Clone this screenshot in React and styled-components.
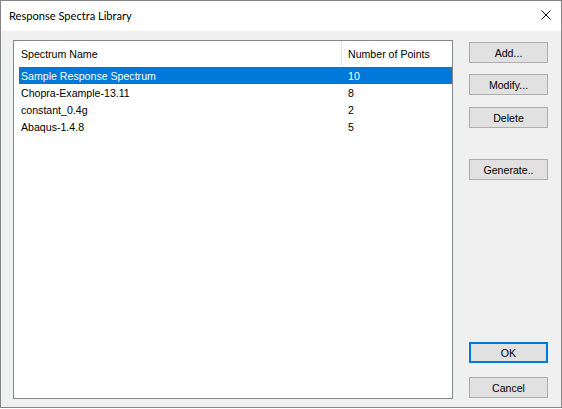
import styled, { createGlobalStyle } from "styled-components";

const GlobalStyle = createGlobalStyle`
  html, body {
    margin: 0;
    padding: 0;
    background: #ffffff;
  }
  body {
    font-family: "Liberation Sans", Arial, sans-serif;
    font-size: 10.6px;
    color: #000;
  }
`;

const Window = styled.div`
  width: 560px;
  height: 406px;
  border: 1px solid #858585;
  display: flex;
  flex-direction: column;
  background: #f0f0f0;
`;

const TitleBar = styled.div`
  height: 30px;
  flex: none;
  background: #ffffff;
  display: flex;
  align-items: center;
  justify-content: space-between;
  padding: 0 10px 0 8px;
`;

const Title = styled.span`
  font-family: Lato, "Noto Sans", sans-serif;
  font-size: 11.1px;
  color: #000;
  margin-top: -2px;
`;

const CloseIcon = styled.svg`
  width: 10px;
  height: 10px;
  margin-top: -2px;
`;

const Body = styled.div`
  flex: 1;
  display: flex;
  gap: 16px;
  padding: 9px 13px 8px 12px;
  min-height: 0;
`;

const ListBox = styled.div`
  flex: 1;
  background: #ffffff;
  border: 1px solid #828790;
  display: flex;
  flex-direction: column;
`;

const Header = styled.div`
  display: flex;
  height: 25px;
  padding-left: 5px;
`;

const HeaderCell = styled.div`
  display: flex;
  align-items: center;
  width: ${({ $width }) => ($width ? `${$width}px` : "auto")};
  flex: ${({ $width }) => ($width ? "none" : "1")};
  padding-left: ${({ $pad }) => $pad}px;
  box-sizing: border-box;
  border-right: ${({ $sep }) => ($sep ? "1px solid #e5e5e5" : "none")};
`;

const Rows = styled.div`
  padding-top: 1px;
  display: flex;
  flex-direction: column;
`;

const Row = styled.div`
  display: flex;
  height: 17px;
  margin-left: 5px;
  align-items: center;
  background: ${({ $selected }) => ($selected ? "#0078d7" : "transparent")};
  color: ${({ $selected }) => ($selected ? "#ffffff" : "#000000")};
`;

const Cell = styled.div`
  width: ${({ $width }) => ($width ? `${$width}px` : "auto")};
  flex: ${({ $width }) => ($width ? "none" : "1")};
  padding-left: ${({ $pad }) => $pad}px;
  box-sizing: border-box;
  white-space: nowrap;
`;

const ButtonColumn = styled.div`
  width: 79px;
  display: flex;
  flex-direction: column;
  padding: 2px 0 1px;
`;

const Button = styled.button`
  height: 21px;
  width: 79px;
  box-sizing: border-box;
  font-family: "Liberation Sans", Arial, sans-serif;
  font-size: 10.6px;
  color: #000;
  background: #e1e1e1;
  border: ${({ $default }) =>
    $default ? "2px solid #0078d7" : "1px solid #adadad"};
  padding: 0;
  margin-top: ${({ $gap }) => ($gap === "auto" ? "auto" : `${$gap || 0}px`)};
`;

const spectra = [
  { name: "Sample Response Spectrum", points: 10 },
  { name: "Chopra-Example-13.11", points: 8 },
  { name: "constant_0.4g", points: 2 },
  { name: "Abaqus-1.4.8", points: 5 },
];

export default function App() {
  return (
    <>
      <GlobalStyle />
      <Window>
        <TitleBar>
          <Title>Response Spectra Library</Title>
          <CloseIcon viewBox="0 0 10 10">
            <path d="M0.5 0.5 L9.5 9.5 M9.5 0.5 L0.5 9.5" stroke="#000" strokeWidth="1" />
          </CloseIcon>
        </TitleBar>
        <Body>
          <ListBox>
            <Header>
              <HeaderCell $width={323} $pad={2} $sep>
                Spectrum Name
              </HeaderCell>
              <HeaderCell $pad={6}>Number of Points</HeaderCell>
            </Header>
            <Rows>
              {spectra.map((s, i) => (
                <Row key={s.name} $selected={i === 0}>
                  <Cell $width={323} $pad={2}>
                    {s.name}
                  </Cell>
                  <Cell $pad={6}>{s.points}</Cell>
                </Row>
              ))}
            </Rows>
          </ListBox>
          <ButtonColumn>
            <Button>Add...</Button>
            <Button $gap={11}>Modify...</Button>
            <Button $gap={12}>Delete</Button>
            <Button $gap={31}>Generate..</Button>
            <Button $gap="auto" $default>
              OK
            </Button>
            <Button $gap={14}>Cancel</Button>
          </ButtonColumn>
        </Body>
      </Window>
    </>
  );
}
